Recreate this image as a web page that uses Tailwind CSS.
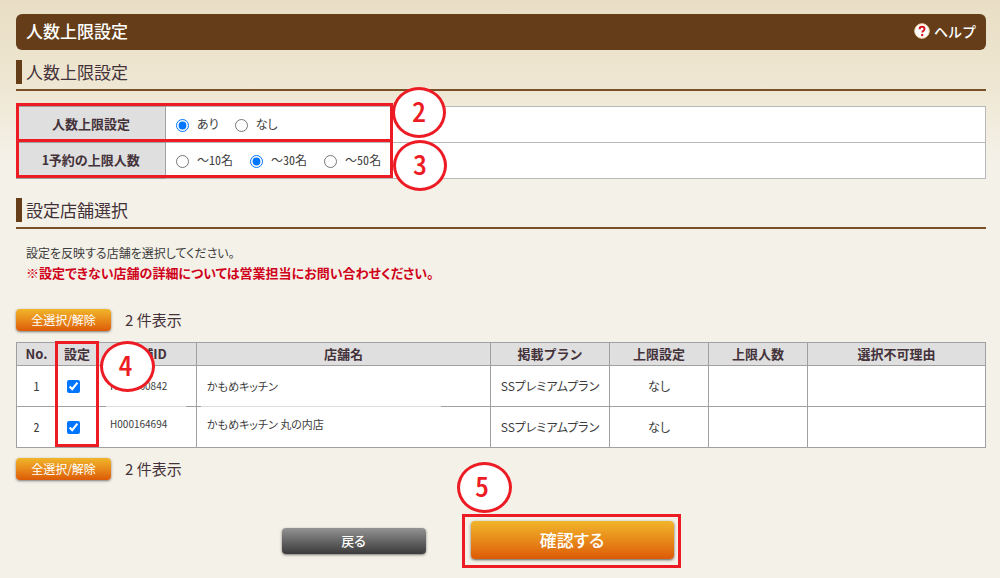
<!DOCTYPE html>
<html lang="ja">
<head>
    <meta charset="UTF-8">
    <meta name="viewport" content="width=device-width, initial-scale=1.0">
    <title>人数上限設定</title>
    <script src="https://cdn.jsdelivr.net/npm/@tailwindcss/browser@4"></script>
</head>
<body class="min-h-screen bg-[#f4f1e8] bg-linear-to-b from-[#e9dec5] from-0% via-[#eee6d1] via-[80px] to-[#f4f1e8] to-[160px] px-4 pt-3.5 pr-3.5 font-['Noto_Sans_CJK_JP',sans-serif] text-xs text-[#3c3c3c] [font-feature-settings:'palt']">

    <header class="flex h-9 items-center justify-between rounded-md bg-[#653d18] px-2.5 text-white">
        <h1 class="pb-0.5 text-[17px] font-medium [font-feature-settings:normal]">人数上限設定</h1>
        <a href="#" class="flex items-center gap-1 pb-0.5 text-sm font-medium [font-feature-settings:normal]">
            <svg class="size-4" viewBox="0 0 16 16">
                <circle cx="8" cy="8" r="7.3" fill="#fff" stroke="#f2d9a8" stroke-width="1" />
                <path d="M5.6 6.2c0-1.6 1-2.4 2.4-2.4s2.5.8 2.5 2.1c0 1.7-2.2 1.8-2.2 3.6" fill="none" stroke="#d7141c" stroke-width="2" />
                <circle cx="8.2" cy="12" r="1.2" fill="#d7141c" />
            </svg>
            ヘルプ
        </a>
    </header>

    <main>
        <!-- Limit settings -->
        <section>
            <div class="mt-2.5 border-b-2 border-[#7a5127] pb-[5px]">
                <h2 class="border-l-6 border-[#653d18] pl-1 text-[17px] leading-6 text-[#44323a] [font-feature-settings:normal]">人数上限設定</h2>
            </div>
            <div class="relative mt-[15px]">
                <table class="w-full table-fixed border-collapse border border-[#a0a0a0] bg-white">
                    <tr class="h-9">
                        <th scope="row" class="w-[149px] border border-[#a0a0a0] bg-[#dfdfdf] pb-0.5 text-[13px] font-bold text-[#44323a] [font-feature-settings:normal]">人数上限設定</th>
                        <td class="border border-[#b8b8b8] pb-0.5 pl-2.5">
                            <div class="flex items-center">
                                <label class="flex items-center gap-2"><input type="radio" name="limit" class="mt-1 size-[13px]" checked> あり</label>
                                <label class="ml-4 flex items-center gap-2"><input type="radio" name="limit" class="mt-1 size-[13px]"> なし</label>
                            </div>
                        </td>
                    </tr>
                    <tr class="h-9">
                        <th scope="row" class="border border-[#a0a0a0] bg-[#dfdfdf] pb-0.5 text-[13px] font-bold text-[#44323a] [font-feature-settings:'hwid']">1予約の上限人数</th>
                        <td class="border border-[#b8b8b8] pb-0.5 pl-2.5">
                            <div class="flex items-center gap-[17px]">
                                <label class="flex items-center gap-2"><input type="radio" name="people" class="mt-1 size-[13px]"><span class="[font-feature-settings:normal]">〜<span class="[font-feature-settings:'hwid']">10</span>名</span></label>
                                <label class="flex items-center gap-2"><input type="radio" name="people" class="mt-1 size-[13px]" checked><span class="[font-feature-settings:normal]">〜<span class="[font-feature-settings:'hwid']">30</span>名</span></label>
                                <label class="flex items-center gap-2"><input type="radio" name="people" class="mt-1 size-[13px]"><span class="[font-feature-settings:normal]">〜<span class="[font-feature-settings:'hwid']">50</span>名</span></label>
                            </div>
                        </td>
                    </tr>
                </table>
                <!-- step markers 2 and 3 -->
                <div class="absolute -top-[3px] left-0 h-[39px] w-[377px] border-3 border-[#ed1c24]"></div>
                <div class="absolute top-[33px] left-0 h-[39px] w-[377px] border-3 border-[#ed1c24]"></div>
                <div class="absolute -top-[19px] left-[376px] flex h-[51px] w-[54px] items-center justify-center rounded-[50%] border-3 border-[#ed1c24] bg-white pb-1 text-[28px] font-medium text-[#ed1c24] [font-feature-settings:'hwid']">2</div>
                <div class="absolute top-[34px] left-[377px] flex h-[51px] w-[54px] items-center justify-center rounded-[50%] border-3 border-[#ed1c24] bg-white pb-1 text-[28px] font-medium text-[#ed1c24] [font-feature-settings:'hwid']">3</div>
            </div>
        </section>

        <!-- Shop selection -->
        <section>
            <div class="mt-[19px] border-b-2 border-[#7a5127] pb-[5px]">
                <h2 class="border-l-6 border-[#653d18] pl-1 text-[17px] leading-6 text-[#44323a] [font-feature-settings:normal]">設定店舗選択</h2>
            </div>
            <div class="mt-3.5 pl-2.5 leading-5">
                <p>設定を反映する店舗を選択してください。</p>
                <p class="text-[13px] font-bold text-[#d0021b]">※設定できない店舗の詳細については営業担当にお問い合わせください。</p>
            </div>

            <div class="mt-[26px] flex items-center gap-3.5">
                <button type="button" class="h-[22px] w-[95px] rounded-sm bg-linear-to-b from-[#f0b52a] to-[#dc5a06] text-xs text-white shadow-sm shadow-black/40">全選択/解除</button>
                <span class="text-[15px] leading-5 text-[#44323a] [font-feature-settings:normal]">2 件表示</span>
            </div>

            <div class="relative mt-[11px]">
                <table class="w-full table-fixed border-collapse border border-[#a0a0a0] bg-white text-center">
                    <thead class="bg-[#dfdfdf] text-[13px] text-[#44323a]">
                        <tr class="h-[23px] [&>th]:border [&>th]:border-[#a0a0a0] [&>th]:font-bold [&>th]:[font-feature-settings:normal]">
                            <th class="w-10">No.</th>
                            <th class="w-[41px]">設定</th>
                            <th class="w-[99px]">店舗ID</th>
                            <th>店舗名</th>
                            <th class="w-[119px]">掲載プラン</th>
                            <th class="w-[99px]">上限設定</th>
                            <th class="w-[99px]">上限人数</th>
                            <th class="w-[178px]">選択不可理由</th>
                        </tr>
                    </thead>
                    <tbody>
                        <tr class="h-[41px] [&>td]:border [&>td]:border-[#a0a0a0]">
                            <td class="[font-feature-settings:'hwid']">1</td>
                            <td class="pr-2"><input type="checkbox" aria-label="かもめキッチン" class="mt-1 size-[13px]" checked></td>
                            <td class="relative pl-3 text-left text-[10px]">H000160842<span class="absolute -bottom-px left-2 h-px w-20 bg-[#dcdcdc]"></span></td>
                            <td class="relative pl-2.5 text-left text-[11px]">かもめキッチン<span class="absolute -bottom-px left-1 h-px w-60 bg-[#dcdcdc]"></span></td>
                            <td>SSプレミアムプラン</td>
                            <td>なし</td>
                            <td></td>
                            <td></td>
                        </tr>
                        <tr class="h-[41px] [&>td]:border [&>td]:border-[#a0a0a0]">
                            <td class="[font-feature-settings:'hwid']">2</td>
                            <td class="pr-2"><input type="checkbox" aria-label="かもめキッチン 丸の内店" class="mt-1 size-[13px]" checked></td>
                            <td class="pb-1.5 pl-3 text-left text-[10px]">H000164694</td>
                            <td class="pb-1.5 pl-2.5 text-left text-[11px]">かもめキッチン 丸の内店</td>
                            <td>SSプレミアムプラン</td>
                            <td>なし</td>
                            <td></td>
                            <td></td>
                        </tr>
                    </tbody>
                </table>
                <!-- step marker 4 -->
                <div class="absolute -top-px left-[39px] h-[106px] w-[44px] border-3 border-[#ed1c24]"></div>
                <div class="absolute -top-px left-[84px] flex h-[51px] w-[55px] items-center justify-center rounded-[50%] border-3 border-[#ed1c24] bg-white pr-1 pb-1 text-[28px] font-medium text-[#ed1c24] [font-feature-settings:'hwid']">4</div>
            </div>

            <div class="mt-2.5 flex items-center gap-3.5">
                <button type="button" class="h-[22px] w-[95px] rounded-sm bg-linear-to-b from-[#f0b52a] to-[#dc5a06] text-xs text-white shadow-sm shadow-black/40">全選択/解除</button>
                <span class="text-[15px] leading-5 text-[#44323a] [font-feature-settings:normal]">2 件表示</span>
            </div>
        </section>

        <div class="mt-[34px] flex items-center justify-center gap-9 pr-10">
            <button type="button" class="h-[26px] w-36 rounded-sm bg-linear-to-b from-[#949494] to-[#3b3b3b] text-[13px] font-medium text-white shadow-sm shadow-black/40">戻る</button>
            <div class="relative border-3 border-[#ed1c24] p-1.5 pt-1 pr-1">
                <button type="button" class="block h-[38px] w-[203px] rounded-sm bg-linear-to-b from-[#f0b52a] to-[#dc5a06] text-[17px] font-medium text-white shadow-sm shadow-black/50">確認する</button>
                <!-- step marker 5 -->
                <div class="absolute -top-[55px] -left-2 flex h-[51px] w-[55px] items-center justify-center rounded-[50%] border-3 border-[#ed1c24] bg-white pr-1 pb-1 text-[28px] font-medium text-[#ed1c24] [font-feature-settings:'hwid']">5</div>
            </div>
        </div>
    </main>

</body>
</html>
